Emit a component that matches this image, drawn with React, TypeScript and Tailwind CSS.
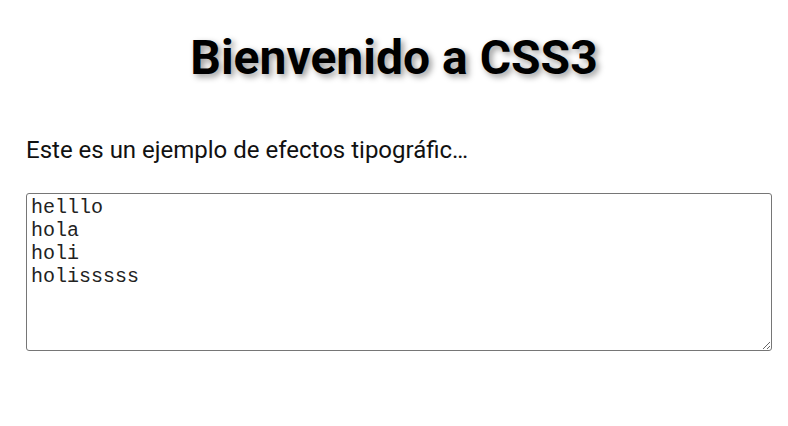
import React from "react";

export default function App() {
  return (
    <div className="min-h-screen w-full bg-white px-[26px] font-['Roboto',sans-serif] text-black">
      <h1 className="pt-[30px] text-center text-[48px] font-bold leading-[56px] [text-shadow:3px_3px_6px_rgba(0,0,0,0.4)]">
        Bienvenido a CSS3
      </h1>

      <p className="mt-[50px] w-[445px] overflow-hidden text-ellipsis whitespace-nowrap text-[24px] leading-[28px] text-[#111]">
        Este es un ejemplo de efectos tipográficos con CSS3
      </p>

      <textarea
        className="mt-[29px] block h-[158px] w-[746px] rounded-[3px] border border-[#767676] px-[4px] py-[2px] font-['Liberation_Mono',monospace] text-[20px] leading-[23px] text-[#222] outline-none"
        defaultValue={"helllo\nhola\nholi\nholisssss"}
      />
    </div>
  );
}
